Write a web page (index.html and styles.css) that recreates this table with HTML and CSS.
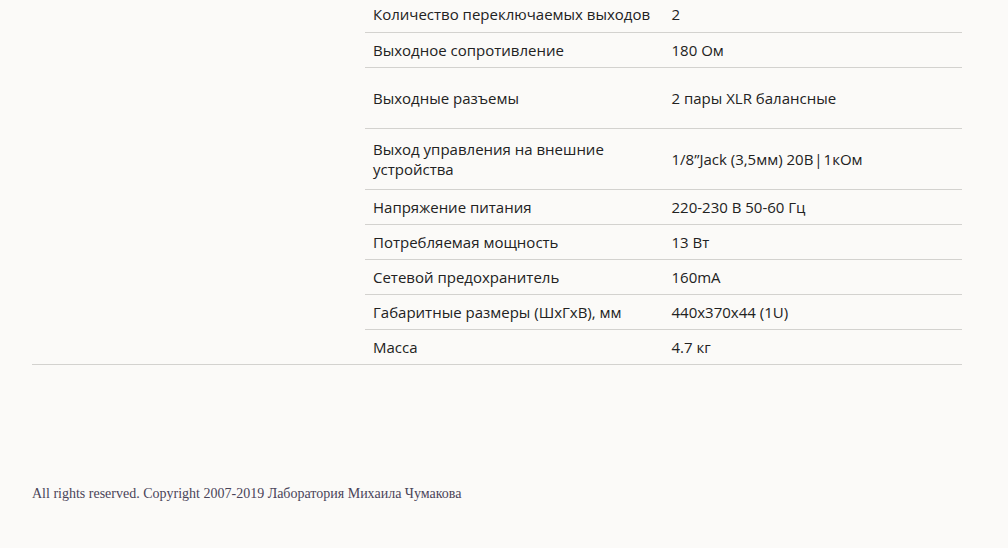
FILE: index.html
```html
<!DOCTYPE html>
<html lang="ru">
<head>
<meta charset="utf-8">
<title>Характеристики</title>
<link rel="stylesheet" href="styles.css">
</head>
<body>
<div class="page">
  <section class="product">
    <div class="aside"></div>
    <table class="specs">
      <tbody>
        <tr><td>Количество переключаемых выходов</td><td>2</td></tr>
        <tr><td>Выходное сопротивление</td><td>180 Ом</td></tr>
        <tr class="tall"><td>Выходные разъемы</td><td>2 пары XLR балансные</td></tr>
        <tr class="tall"><td>Выход управления на внешние устройства</td><td>1/8”Jack (3,5мм) 20В<span class="sep">|</span>1кОм</td></tr>
        <tr><td>Напряжение питания</td><td>220-230 В 50-60 Гц</td></tr>
        <tr><td>Потребляемая мощность</td><td>13 Вт</td></tr>
        <tr><td>Сетевой предохранитель</td><td>160mA</td></tr>
        <tr><td>Габаритные размеры (ШхГхВ), мм</td><td>440x370x44 (1U)</td></tr>
        <tr><td>Масса</td><td>4.7 кг</td></tr>
      </tbody>
    </table>
  </section>
  <footer class="footer">All rights reserved. Copyright 2007-2019 Лаборатория Михаила Чумакова</footer>
</div>
</body>
</html>
```
FILE: styles.css
```css
html, body {
  margin: 0;
  padding: 0;
  background: #fbfaf8;
}
.page {
  width: 930px;
  margin: -3px 0 0 32px;
}
.product {
  display: grid;
  grid-template-columns: 333px 1fr;
  border-bottom: 1px solid #d3d2cf;
}
.specs {
  width: 100%;
  border-collapse: collapse;
  font-family: "Open Sans", sans-serif;
  font-size: 15px;
  line-height: 20px;
  color: #222;
}
.specs td {
  width: 50%;
  height: 35px;
  padding: 0 8px;
  box-sizing: border-box;
  vertical-align: middle;
  border-bottom: 1px solid #d3d2cf;
}
.specs tr:last-child td {
  border-bottom: none;
}
.specs tr.tall td {
  height: 61px;
}
.sep {
  padding: 0 1px;
}
.footer {
  margin-top: 120px;
  font-family: "Liberation Serif", serif;
  font-size: 14px;
  line-height: 18px;
  color: #4a4458;
}
```
